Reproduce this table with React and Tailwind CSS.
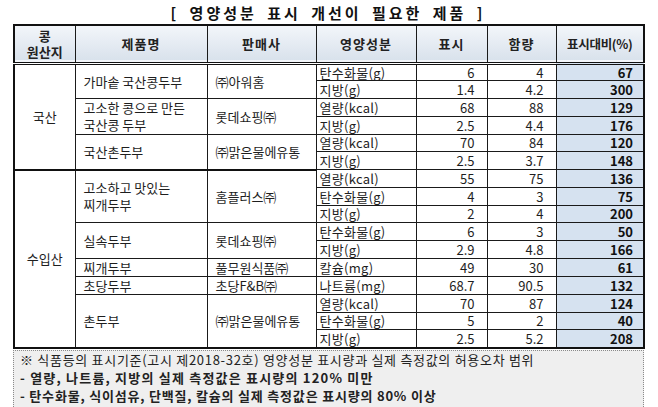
import React from 'react';

const groups = [
  {
    origin: '국산',
    products: [
      {
        name: ['가마솥 국산콩두부'],
        seller: '㈜아워홈',
        rows: [
          ['탄수화물(g)', '6', '4', '67'],
          ['지방(g)', '1.4', '4.2', '300'],
        ],
      },
      {
        name: ['고소한 콩으로 만든', '국산콩 두부'],
        seller: '롯데쇼핑㈜',
        rows: [
          ['열량(kcal)', '68', '88', '129'],
          ['지방(g)', '2.5', '4.4', '176'],
        ],
      },
      {
        name: ['국산촌두부'],
        seller: '㈜맑은물에유통',
        rows: [
          ['열량(kcal)', '70', '84', '120'],
          ['지방(g)', '2.5', '3.7', '148'],
        ],
      },
    ],
  },
  {
    origin: '수입산',
    products: [
      {
        name: ['고소하고 맛있는', '찌개두부'],
        seller: '홈플러스㈜',
        rows: [
          ['열량(kcal)', '55', '75', '136'],
          ['탄수화물(g)', '4', '3', '75'],
          ['지방(g)', '2', '4', '200'],
        ],
      },
      {
        name: ['실속두부'],
        seller: '롯데쇼핑㈜',
        rows: [
          ['탄수화물(g)', '6', '3', '50'],
          ['지방(g)', '2.9', '4.8', '166'],
        ],
      },
      {
        name: ['찌개두부'],
        seller: '풀무원식품㈜',
        rows: [['칼슘(mg)', '49', '30', '61']],
      },
      {
        name: ['초당두부'],
        seller: '초당F&B㈜',
        rows: [['나트륨(mg)', '68.7', '90.5', '132']],
      },
      {
        name: ['촌두부'],
        seller: '㈜맑은물에유통',
        rows: [
          ['열량(kcal)', '70', '87', '124'],
          ['탄수화물(g)', '5', '2', '40'],
          ['지방(g)', '2.5', '5.2', '208'],
        ],
      },
    ],
  },
];

const font = { fontFamily: '"Noto Sans CJK KR", "Noto Sans", sans-serif' };

const cell = 'border border-[#1a1a1a] p-0';

const App = () => {
  return (
    <div className="w-[658px] h-[407px] bg-white text-[#1e1e1e]" style={font}>
      <div className="w-[630px] ml-[13px] pt-[4px]">
        <h1 className="text-center text-[15px] font-bold leading-[18px] tracking-[3px] [word-spacing:4px] text-[#111]">
          [ 영양성분 표시 개선이 필요한 제품 ]
        </h1>

        <table className="mt-[2px] w-[630px] table-fixed border-collapse border-2 border-[#111] text-[13px] leading-none">
          <colgroup>
            <col className="w-[61px]" />
            <col className="w-[132px]" />
            <col className="w-[109px]" />
            <col className="w-[100px]" />
            <col className="w-[71px]" />
            <col className="w-[69px]" />
            <col className="w-[88px]" />
          </colgroup>
          <thead>
            <tr className="h-[38px] bg-gradient-to-b from-[#f3f6fa] to-[#d9e2ec] border-b-[3px] border-double border-[#111] text-[#222]">
              <th className={`${cell} font-bold`}>
                <div className="leading-[16px]">콩</div>
                <div className="leading-[16px]">원산지</div>
              </th>
              <th className={`${cell} font-bold tracking-[1px]`}>제품명</th>
              <th className={`${cell} font-bold tracking-[1px]`}>판매사</th>
              <th className={`${cell} font-bold tracking-[1px]`}>영양성분</th>
              <th className={`${cell} font-bold tracking-[1px]`}>표시</th>
              <th className={`${cell} font-bold tracking-[1px]`}>함량</th>
              <th className={`${cell} font-bold text-[12.5px] tracking-[-0.3px]`}>표시대비(%)</th>
            </tr>
          </thead>
          <tbody>
            {groups.map((g) => {
              const total = g.products.reduce((n, p) => n + p.rows.length, 0);
              return g.products.map((p, pi) =>
                p.rows.map((r, ri) => {
                  const groupTop = pi === 0 && ri === 0 && g.origin === '수입산';
                  return (
                    <tr key={`${g.origin}-${pi}-${ri}`} className="h-[17.75px]">
                      {pi === 0 && ri === 0 && (
                        <td rowSpan={total} className={`${cell} text-center border-t-2 border-t-[#111]`}>
                          {g.origin}
                        </td>
                      )}
                      {ri === 0 && (
                        <>
                          <td
                            rowSpan={p.rows.length}
                            className={`${cell} pl-[8px] ${groupTop ? 'border-t-2 border-t-[#111]' : ''}`}
                          >
                            {p.name.map((line) => (
                              <div key={line} className="leading-[17px]">
                                {line}
                              </div>
                            ))}
                          </td>
                          <td
                            rowSpan={p.rows.length}
                            className={`${cell} pl-[8px] ${groupTop ? 'border-t-2 border-t-[#111]' : ''}`}
                          >
                            {p.seller}
                          </td>
                        </>
                      )}
                      <td className={`${cell} pl-[3px] tracking-[0.3px]`}>{r[0]}</td>
                      <td className={`${cell} text-right pr-[12px]`}>{r[1]}</td>
                      <td className={`${cell} text-right pr-[12px]`}>{r[2]}</td>
                      <td className={`${cell} text-right pr-[10px] font-bold bg-[#d6e2f0] text-[#111]`}>{r[3]}</td>
                    </tr>
                  );
                })
              );
            })}
          </tbody>
        </table>

        <div className="w-[631px] mt-[1px] border border-dotted border-[#8a8a8a] bg-[#efefef] px-[6px] pt-0 pb-[3px] text-[13px] leading-[18px] text-[#222]">
          <p className="tracking-[0.7px]">※ 식품등의 표시기준(고시 제2018-32호) 영양성분 표시량과 실제 측정값의 허용오차 범위</p>
          <p className="font-bold tracking-[1.2px]">- 열량, 나트륨, 지방의 실제 측정값은 표시량의 120% 미만</p>
          <p className="font-bold tracking-[0.8px]">- 탄수화물, 식이섬유, 단백질, 칼슘의 실제 측정값은 표시량의 80% 이상</p>
        </div>
      </div>
    </div>
  );
};

export default App;
